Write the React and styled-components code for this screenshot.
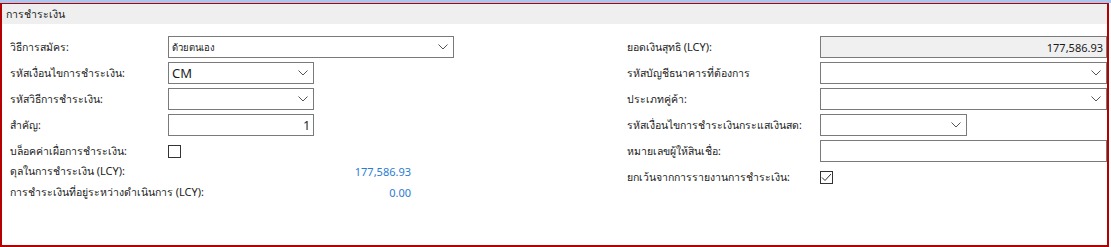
import React from 'react';
import styled, { createGlobalStyle } from 'styled-components';

const GlobalStyle = createGlobalStyle`
  html, body {
    margin: 0;
    padding: 0;
    background: #ffffff;
  }
  body {
    font-family: 'Segoe UI', Tahoma, 'Noto Sans', 'DejaVu Sans', sans-serif;
    font-size: 11px;
    color: #212121;
  }
`;

const Page = styled.div`
  width: 1111px;
  height: 247px;
  display: flex;
  flex-direction: column;
  box-sizing: border-box;
  border-top: 3px solid #a9c8f0;
`;

const Panel = styled.section`
  flex: 1;
  margin-right: 2px;
  border: 2px solid #b40000;
  border-top-width: 1px;
  display: flex;
  flex-direction: column;
`;

const Header = styled.header`
  height: 20px;
  background: #efefef;
  display: flex;
  align-items: center;
  padding-left: 4px;
  font-size: 10.5px;
  color: #1a1a1a;
`;

const Body = styled.div`
  display: grid;
  grid-template-columns: 617px 1fr;
  padding: 10px 0 0 8px;
`;

const Column = styled.div`
  display: flex;
  flex-direction: column;
`;

const Row = styled.div`
  display: grid;
  grid-template-columns: ${({ $label }) => $label}px 1fr;
  align-items: center;
  height: ${({ $h }) => $h || 26}px;
`;

const Label = styled.span`
  white-space: nowrap;
  font-size: 10.5px;
  color: #222;
`;

const Lat = styled.span`
  font-size: 11px;
`;

const Box = styled.div`
  box-sizing: border-box;
  width: ${({ $w }) => ($w ? `${$w}px` : '100%')};
  height: 22px;
  border: 1px solid #7a7a7a;
  background: ${({ $disabled }) => ($disabled ? '#f0f0f0' : '#ffffff')};
  display: flex;
  align-items: center;
  justify-content: ${({ $right }) => ($right ? 'flex-end' : 'space-between')};
  padding: 0 3px 0 3px;
  font-size: ${({ $size }) => $size || 11}px;
  color: #1a1a1a;
`;

const Chevron = styled.svg`
  width: 10px;
  height: 6px;
  margin-left: auto;
  margin-right: 2px;
  flex: none;
`;

const Check = styled.div`
  box-sizing: border-box;
  width: 13px;
  height: 13px;
  border: 1px solid #333;
  display: flex;
  align-items: center;
  justify-content: center;
`;

const Value = styled.span`
  width: ${({ $w }) => $w}px;
  text-align: right;
  font-size: 11px;
  color: #2b7cd3;
`;

const DisplayGroup = styled.div`
  margin-top: -3px;
`;

const Down = () => (
  <Chevron viewBox="0 0 10 6">
    <path d="M0.5 0.5 L5 5 L9.5 0.5" fill="none" stroke="#555" strokeWidth="1" />
  </Chevron>
);

const Select = ({ w, children, size }) => (
  <Box $w={w} $size={size}>
    {children}
    <Down />
  </Box>
);

export default function App() {
  return (
    <>
      <GlobalStyle />
      <Page>
        <Panel>
          <Header>การชำระเงิน</Header>
          <Body>
            <Column>
              <Row $label={158}>
                <Label>วิธีการสมัคร:</Label>
                <Select w={286} size={9.5}>ด้วยตนเอง</Select>
              </Row>
              <Row $label={158}>
                <Label>รหัสเงื่อนไขการชำระเงิน:</Label>
                <Select w={146} size={13}>CM</Select>
              </Row>
              <Row $label={158}>
                <Label>รหัสวิธีการชำระเงิน:</Label>
                <Select w={146} />
              </Row>
              <Row $label={158}>
                <Label>สำคัญ:</Label>
                <Box $w={146} $right $size={12}>1</Box>
              </Row>
              <Row $label={158}>
                <Label>บล็อคค่าเผื่อการชำระเงิน:</Label>
                <Check />
              </Row>
              <DisplayGroup>
                <Row $label={158} $h={21}>
                  <Label>ดุลในการชำระเงิน <Lat>(LCY):</Lat></Label>
                  <Value $w={243}>177,586.93</Value>
                </Row>
                <Row $label={158} $h={21}>
                  <Label>การชำระเงินที่อยู่ระหว่างดำเนินการ <Lat>(LCY):</Lat></Label>
                  <Value $w={243}>0.00</Value>
                </Row>
              </DisplayGroup>
            </Column>
            <Column>
              <Row $label={193}>
                <Label>ยอดเงินสุทธิ <Lat>(LCY):</Lat></Label>
                <Box $disabled $right>177,586.93</Box>
              </Row>
              <Row $label={193}>
                <Label>รหัสบัญชีธนาคารที่ต้องการ</Label>
                <Select />
              </Row>
              <Row $label={193}>
                <Label>ประเภทคู่ค้า:</Label>
                <Select />
              </Row>
              <Row $label={193}>
                <Label>รหัสเงื่อนไขการชำระเงินกระแสเงินสด:</Label>
                <Select w={147} />
              </Row>
              <Row $label={193}>
                <Label>หมายเลขผู้ให้สินเชื่อ:</Label>
                <Box />
              </Row>
              <Row $label={193}>
                <Label>ยกเว้นจากการรายงานการชำระเงิน:</Label>
                <Check>
                  <svg width="11" height="9" viewBox="0 0 11 9">
                    <path d="M1 4.5 L4 7.5 L10 1" fill="none" stroke="#333" strokeWidth="1" />
                  </svg>
                </Check>
              </Row>
            </Column>
          </Body>
        </Panel>
      </Page>
    </>
  );
}
